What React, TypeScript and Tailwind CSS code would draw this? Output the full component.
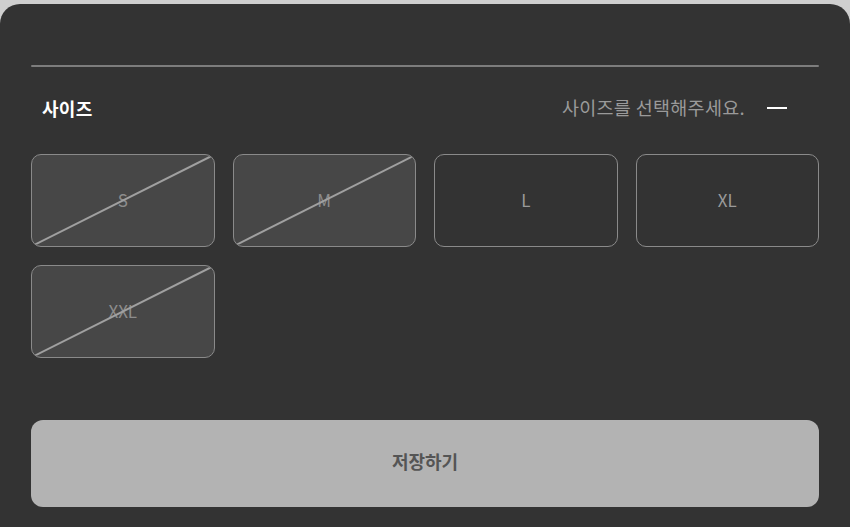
import React from "react";

const FONT = { fontFamily: '"Noto Sans CJK KR", "Noto Sans", sans-serif' };

const sizes = [
  { label: "S", soldOut: true },
  { label: "M", soldOut: true },
  { label: "L", soldOut: false },
  { label: "XL", soldOut: false },
  { label: "XXL", soldOut: true },
];

function SizeOption({ label, soldOut }: { label: string; soldOut: boolean }) {
  return (
    <div
      className={`relative h-[93px] rounded-[10px] border border-[#8a8a8a] flex items-center justify-center overflow-hidden pb-[3px] ${
        soldOut ? "bg-[#474747]" : "bg-transparent"
      }`}
    >
      <span className={`text-[17px] leading-none ${soldOut ? "text-[#8c8c8c]" : "text-[#9a9a9a]"}`}>{label}</span>
      {soldOut && (
        <svg className="absolute inset-0 w-full h-full" preserveAspectRatio="none" viewBox="0 0 100 100">
          <line x1="0" y1="100" x2="100" y2="0" stroke="#a0a0a0" strokeWidth="2" vectorEffect="non-scaling-stroke" />
        </svg>
      )}
    </div>
  );
}

export default function App() {
  return (
    <div className="h-[527px] bg-[#cfcfcf] pt-1 overflow-hidden" style={FONT}>
      <div className="h-[523px] bg-[#333333] rounded-t-[20px] px-[31px] pt-[61px]">
        {/* divider */}
        <div className="h-[2px] bg-[#7d7d7d] rounded-full" />

        {/* header */}
        <div className="mt-[22px] h-[40px] flex items-center justify-between pl-[11px] pr-[32px] pb-[2px]">
          <span className="text-[18px] font-bold text-white tracking-[0.3px]">사이즈</span>
          <div className="flex items-center gap-[22px]">
            <span className="text-[18.5px] text-[#9a9a9a] tracking-[0.3px]">사이즈를 선택해주세요.</span>
            <span className="block w-[20px] h-[2px] bg-white" />
          </div>
        </div>

        {/* size grid */}
        <div className="mt-[25px] grid grid-cols-4 gap-[18px]">
          {sizes.map((s) => (
            <SizeOption key={s.label} label={s.label} soldOut={s.soldOut} />
          ))}
        </div>

        <button className="mt-[62px] w-full h-[87px] rounded-[12px] bg-[#b3b3b3] text-[18px] font-bold text-[#555555] pb-[4px]">
          저장하기
        </button>
      </div>
    </div>
  );
}
